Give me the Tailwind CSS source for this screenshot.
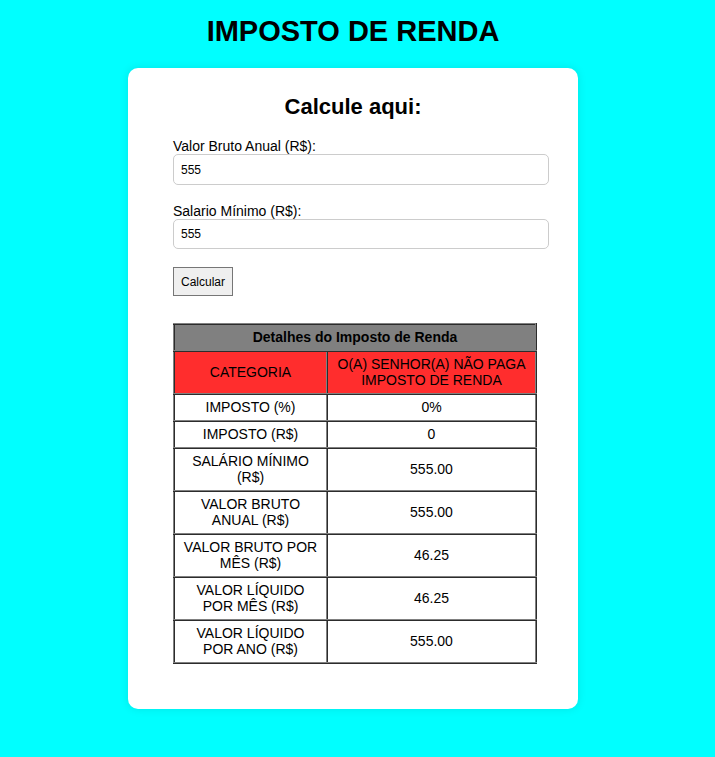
<!DOCTYPE html>
<html lang="pt-BR">
<head>
<meta charset="UTF-8">
<meta name="viewport" content="width=device-width, initial-scale=1">
<title>Imposto de Renda</title>
<script src="https://cdn.jsdelivr.net/npm/@tailwindcss/browser@4"></script>
</head>
<body class="min-h-screen bg-[#00ffff] pt-[15px] pr-[9px] pb-10 font-['Liberation_Sans',Arial,sans-serif] text-[14px] leading-4 text-black">
<h1 class="mb-5 text-center text-[29px] leading-[33px] font-bold">IMPOSTO DE RENDA</h1>
<main class="mx-auto max-w-[450px] rounded-[10px] bg-white pt-[26px] pr-[29px] pb-[45px] pl-[45px] shadow-[0_0_10px_rgba(0,0,0,0.1)]">
  <h2 class="mr-4 mb-[19px] text-center text-[22px] leading-[25px] font-bold">Calcule aqui:</h2>
  <form class="mb-[27px]" onsubmit="return false">
    <div class="mb-[18px]">
      <label class="block" for="bruto">Valor Bruto Anual (R$):</label>
      <input id="bruto" type="text" inputmode="decimal" value="555" class="block h-[31px] w-full rounded-[5px] border border-[#cccccc] bg-white px-[7px] text-[12px]">
    </div>
    <div class="mb-[18px]">
      <label class="block" for="salario">Salario Mínimo (R$):</label>
      <input id="salario" type="text" inputmode="decimal" value="555" class="block h-[30px] w-full rounded-[5px] border border-[#cccccc] bg-white px-[7px] text-[12px]">
    </div>
    <button type="submit" class="block h-[29px] border border-[#767676] bg-[#efefef] px-[7px] text-[12px]">Calcular</button>
  </form>
  <div class="pr-3">
    <table class="w-full table-fixed border-collapse border-2 border-[#808080] text-center [border-style:ridge] [&_td]:border-2 [&_td]:border-[#808080] [&_td]:px-[5px] [&_td]:pt-1 [&_td]:pb-[5px] [&_td]:[border-style:ridge] [&_th]:border-2 [&_th]:border-[#808080] [&_th]:px-[5px] [&_th]:pt-1 [&_th]:pb-[5px] [&_th]:[border-style:ridge]">
      <colgroup><col class="w-[153px]"><col></colgroup>
      <thead>
        <tr class="bg-[#808080]"><th colspan="2">Detalhes do Imposto de Renda</th></tr>
      </thead>
      <tbody>
        <tr class="bg-[#ff2d2d]"><td>CATEGORIA</td><td>O(A) SENHOR(A) NÃO PAGA IMPOSTO DE RENDA</td></tr>
        <tr><td>IMPOSTO (%)</td><td>0%</td></tr>
        <tr><td>IMPOSTO (R$)</td><td>0</td></tr>
        <tr><td>SALÁRIO MÍNIMO (R$)</td><td>555.00</td></tr>
        <tr><td>VALOR BRUTO ANUAL (R$)</td><td>555.00</td></tr>
        <tr><td>VALOR BRUTO POR MÊS (R$)</td><td>46.25</td></tr>
        <tr><td>VALOR LÍQUIDO POR MÊS (R$)</td><td>46.25</td></tr>
        <tr><td>VALOR LÍQUIDO POR ANO (R$)</td><td>555.00</td></tr>
      </tbody>
    </table>
  </div>
</main>
</body>
</html>
